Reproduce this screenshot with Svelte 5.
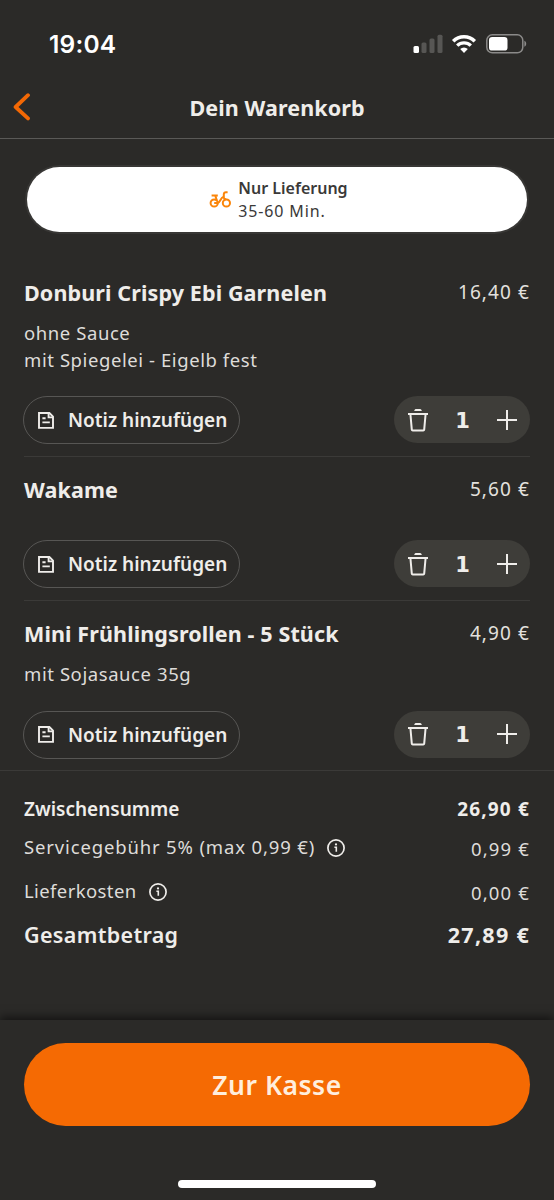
<script>
  const items = [
    {
      name: "Donburi Crispy Ebi Garnelen",
      price: "16,40 €",
      options: ["ohne Sauce", "mit Spiegelei - Eigelb fest"],
      count: 1,
    },
    { name: "Wakame", price: "5,60 €", options: [], count: 1 },
    {
      name: "Mini Frühlingsrollen - 5 Stück",
      price: "4,90 €",
      options: ["mit Sojasauce 35g"],
      count: 1,
    },
  ];

  let cart = $state(items);

  function add(item) {
    item.count += 1;
  }

  function remove(item) {
    if (item.count > 1) {
      item.count -= 1;
    } else {
      cart = cart.filter((i) => i !== item);
    }
  }
</script>

{#snippet infoIcon()}
  <svg class="info" viewBox="0 0 18 18" width="18" height="18">
    <circle cx="9" cy="9" r="8.1" fill="none" stroke="currentColor" stroke-width="1.7" />
    <circle cx="9" cy="5.4" r="1.1" fill="currentColor" />
    <path d="M7.4 8.2H9.3V12.8" fill="none" stroke="currentColor" stroke-width="1.6" />
  </svg>
{/snippet}

<div class="screen">
  <div class="status-bar">
    <span class="time">19:04</span>
    <div class="status-icons">
      <svg viewBox="0 0 30 20" width="30" height="20">
        <rect x="0.5" y="12" width="5.5" height="7" rx="1.5" fill="#fff" />
        <rect x="8.5" y="8.5" width="5" height="10.5" rx="1.5" fill="#575654" />
        <rect x="16.5" y="4.5" width="5" height="14.5" rx="1.5" fill="#575654" />
        <rect x="24.5" y="0.8" width="5" height="18.2" rx="1.5" fill="#575654" />
      </svg>
      <svg class="wifi" viewBox="0 0 26 20" width="26" height="20">
        <path d="M2.2 7.2A15.4 15.4 0 0 1 23.8 7.2" fill="none" stroke="#fff" stroke-width="3.6" />
        <path d="M6.2 11.6A9.8 9.8 0 0 1 19.8 11.6" fill="none" stroke="#fff" stroke-width="3.4" />
        <path d="M13 19L9.2 15.1A5.4 5.4 0 0 1 16.8 15.1Z" fill="#fff" />
      </svg>
      <svg class="battery" viewBox="0 0 42 20" width="42" height="20">
        <rect x="0.8" y="0.8" width="36" height="18" rx="5.5" fill="none" stroke="#8b8a89" stroke-width="1.5" />
        <rect x="3" y="3" width="18.5" height="13.6" rx="3.2" fill="#fff" />
        <path d="M38.4 6.8V12.8C40.8 12 40.8 7.6 38.4 6.8Z" fill="#8b8a89" />
      </svg>
    </div>
  </div>

  <header>
    <button class="back" aria-label="Zurück">
      <svg viewBox="0 0 18 28" width="18" height="28">
        <path d="M16 2.2L3.6 14L16 25.4" />
      </svg>
    </button>
    <h1>Dein Warenkorb</h1>
  </header>

  <main>
    <div class="delivery">
      <svg viewBox="0 0 22 17" width="22" height="17">
        <g fill="none" stroke="#fb8509" stroke-width="2">
          <circle cx="5.2" cy="12" r="3.6" />
          <circle cx="17.4" cy="12" r="3.6" />
          <path d="M2.6 4.6H8.8M6.4 5L7.8 9.4" />
          <path d="M5.2 12H8.6C11.4 12 11.2 6.4 14.8 5.8" />
          <path d="M18.6 1.2H17C15.4 1.2 14.8 2.2 14.8 3.6V6.4C14.8 7.8 16 8 17 8.4" />
        </g>
      </svg>
      <div class="delivery-text">
        <strong>Nur Lieferung</strong>
        <span>35-60 Min.</span>
      </div>
    </div>

    <div class="items">
      {#each cart as item}
        <section class="item">
          <div class="item-head">
            <h2>{item.name}</h2>
            <span class="price">{item.price}</span>
          </div>
          <div class="options">
            {#each item.options as option}
              <p>{option}</p>
            {/each}
          </div>
          <div class="actions">
            <button class="note">
              <svg viewBox="0 0 16 17" width="16" height="17">
                <path d="M1 1H11.4L15 4.6V15.9H1Z" />
                <path d="M10.6 1V5.4H15M4.4 6.2H7.6M4.4 10.4H11.8" />
              </svg>
              Notiz hinzufügen
            </button>
            <div class="stepper">
              <button aria-label="Entfernen" onclick={() => remove(item)}>
                <svg viewBox="0 0 20 24" width="20" height="24">
                  <path d="M0 6H20M2.4 6L3.8 21.6Q3.9 22.5 4.8 22.5H15.2Q16.1 22.5 16.2 21.6L17.6 6" />
                  <path class="lid" d="M6.2 3C6.5 1.6 7.2 1 8.4 1H11.6C12.8 1 13.5 1.6 13.8 3Z" />
                </svg>
              </button>
              <span class="count">{item.count}</span>
              <button aria-label="Hinzufügen" onclick={() => add(item)}>
                <svg viewBox="0 0 20 20" width="20" height="20">
                  <path d="M10 0V20M0 10H20" />
                </svg>
              </button>
            </div>
          </div>
        </section>
      {/each}
    </div>

    <div class="summary">
      <div class="row subtotal">
        <span>Zwischensumme</span>
        <span class="amount">26,90 €</span>
      </div>
      <div class="row fee">
        <span class="label service">Servicegebühr 5% (max 0,99 €) {@render infoIcon()}</span>
        <span class="amount">0,99 €</span>
      </div>
      <div class="row fee">
        <span class="label">Lieferkosten {@render infoIcon()}</span>
        <span class="amount">0,00 €</span>
      </div>
      <div class="row total">
        <span>Gesamtbetrag</span>
        <span class="amount">27,89 €</span>
      </div>
    </div>
  </main>

  <footer>
    <button class="checkout">Zur Kasse</button>
    <div class="home-indicator"></div>
  </footer>
</div>

<style>
  :global(body) {
    background: #2b2a28;
  }

  .screen {
    width: 554px;
    height: 1200px;
    display: flex;
    flex-direction: column;
    overflow: hidden;
    background: #2b2a28;
    color: #efedea;
    font-family: "Noto Sans", sans-serif;
  }

  button {
    font: inherit;
    color: inherit;
    background: none;
    border: none;
    padding: 0;
    cursor: pointer;
  }

  h1,
  h2,
  p {
    margin: 0;
  }

  svg {
    display: block;
    flex: none;
  }

  .status-bar {
    height: 78px;
    box-sizing: border-box;
    padding: 10px 27px 0 49px;
    display: flex;
    align-items: center;
    justify-content: space-between;
    color: #fff;
  }

  .time {
    font-family: Inter, sans-serif;
    font-size: 24.5px;
    font-weight: 600;
    letter-spacing: 0.2px;
  }

  .status-icons {
    display: flex;
    align-items: center;
  }

  .wifi {
    margin-left: 8px;
  }

  .battery {
    margin-left: 9px;
    margin-right: -1px;
  }

  header {
    height: 61px;
    box-sizing: border-box;
    display: grid;
    grid-template-columns: 42px 1fr 42px;
    align-items: center;
    border-bottom: 1px solid #5a5957;
  }

  .back {
    padding: 0 0 2px 12px;
  }

  .back path {
    fill: none;
    stroke: #f36805;
    stroke-width: 3.8;
    stroke-linecap: round;
    stroke-linejoin: round;
  }

  h1 {
    text-align: center;
    font-size: 21.5px;
    font-weight: 700;
    line-height: 28px;
    letter-spacing: 0.1px;
  }

  main {
    flex: 1;
    padding-top: 28px;
  }

  .delivery {
    height: 65px;
    margin: 0 27px;
    border-radius: 33px;
    background: #fff;
    box-shadow: 0 0 0 2px #383735;
    color: #3a3938;
    display: flex;
    align-items: center;
    justify-content: center;
    gap: 7px;
    padding-left: 3px;
  }

  .delivery-text {
    display: flex;
    flex-direction: column;
    font-size: 16px;
    line-height: 23px;
  }

  .delivery-text strong {
    font-weight: 600;
  }

  .delivery-text span {
    letter-spacing: 0.85px;
  }

  .items {
    padding-top: 27px;
    border-bottom: 1px solid #3b3a38;
  }

  .item {
    margin: 0 24px;
    padding: 19px 0 12px;
    border-bottom: 1px solid #3b3a38;
  }

  .item:first-child {
    padding-top: 20px;
  }

  .item:last-child {
    padding-bottom: 11px;
    border-bottom: none;
  }

  .item-head {
    display: flex;
    justify-content: space-between;
    line-height: 28px;
  }

  h2 {
    font-size: 21.5px;
    font-weight: 700;
    letter-spacing: 0.12px;
  }

  .price {
    font-size: 19px;
    line-height: 26px;
    letter-spacing: 1.1px;
    color: #e3e1de;
  }

  .options {
    padding: 13px 0 23px;
    font-size: 18.5px;
    line-height: 26.5px;
    letter-spacing: 0.58px;
    color: #dedcd9;
  }

  .actions {
    display: flex;
    justify-content: space-between;
  }

  .note {
    width: 217px;
    height: 48px;
    margin-left: -1px;
    padding-left: 14px;
    box-sizing: border-box;
    border: 1.5px solid #575654;
    border-radius: 24px;
    display: flex;
    align-items: center;
    gap: 14px;
    font-size: 19px;
    font-weight: 600;
    white-space: nowrap;
  }

  .note path {
    fill: none;
    stroke: currentColor;
    stroke-width: 1.9;
  }

  .stepper {
    width: 136px;
    height: 47px;
    box-sizing: border-box;
    padding: 0 13px 0 14px;
    border-radius: 24px;
    background: #3e3d39;
    display: flex;
    align-items: center;
    justify-content: space-between;
  }

  .stepper path {
    fill: none;
    stroke: currentColor;
    stroke-width: 2;
  }

  .stepper .lid {
    fill: currentColor;
    stroke: none;
  }

  .count {
    font-family: "DejaVu Sans", sans-serif;
    font-size: 21px;
    font-weight: 700;
    padding-top: 2px;
  }

  .summary {
    padding: 24px 24px 0;
  }

  .row {
    display: flex;
    justify-content: space-between;
    line-height: 28px;
  }

  .amount {
    letter-spacing: 1.15px;
  }

  .subtotal {
    font-size: 19px;
    font-weight: 600;
  }

  .subtotal .amount {
    font-weight: 700;
  }

  .fee {
    font-size: 18.5px;
    padding-top: 10px;
    color: #dedcd9;
  }

  .fee .amount {
    padding-top: 2px;
  }

  .fee + .fee {
    padding-top: 14px;
  }

  .label {
    display: flex;
    align-items: center;
    gap: 12px;
    letter-spacing: 0.4px;
    margin-top: -1px;
  }

  .service {
    letter-spacing: 0.85px;
  }

  .info {
    color: #efedea;
    margin-top: 2px;
  }

  .total {
    padding-top: 14px;
    font-size: 21.5px;
    font-weight: 600;
    letter-spacing: 0.33px;
  }

  .total .amount {
    font-weight: 700;
    letter-spacing: 1.3px;
  }

  footer {
    height: 180px;
    box-sizing: border-box;
    padding: 23px 24px 0;
    background: #2b2a28;
    box-shadow: 0 -3px 9px rgba(0, 0, 0, 0.55);
  }

  .checkout {
    display: block;
    width: 100%;
    height: 83px;
    border-radius: 42px;
    background: #f56a03;
    color: #ffeedd;
    font-size: 26.5px;
    font-weight: 600;
    letter-spacing: 0.5px;
  }

  .home-indicator {
    width: 198px;
    height: 8px;
    margin: 54px auto 0;
    border-radius: 4px;
    background: #fff;
  }
</style>
